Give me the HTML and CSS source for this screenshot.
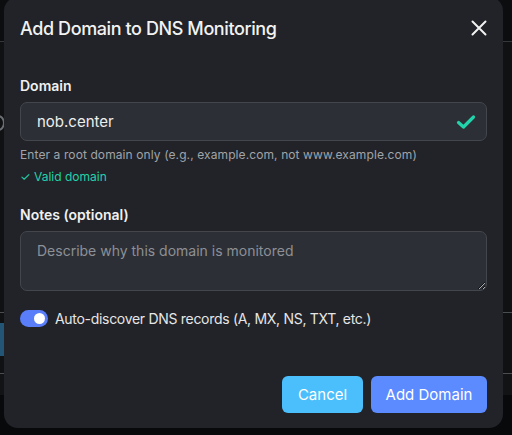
FILE: index.html
```html
<!DOCTYPE html>
<html lang="en">

<head>
    <meta charset="UTF-8">
    <meta name="viewport" content="width=device-width, initial-scale=1.0">
    <title>Add Domain to DNS Monitoring</title>
    <link rel="stylesheet" href="styles.css">
</head>

<body>

    <!-- page behind the dialog -->
    <div class="backdrop">
        <div class="bd-header"></div>
        <div class="bd-main">
            <div class="bd-glyph"></div>
        </div>
        <div class="bd-row">
            <div class="bd-chip"></div>
        </div>
        <div class="bd-gap"></div>
        <div class="bd-footer"></div>
    </div>

    <div class="modal">
        <div class="modal-header">
            <h2>Add Domain to DNS Monitoring</h2>
            <button class="close-btn" aria-label="Close">
                <svg width="16" height="16" viewBox="0 0 16 16">
                    <path d="M1.5 1.5L14.5 14.5M14.5 1.5L1.5 14.5" stroke="#f2f2f2" stroke-width="2" stroke-linecap="round" fill="none"/>
                </svg>
            </button>
        </div>

        <div class="modal-body">
            <div class="field">
                <label for="domainInput">Domain</label>
                <div class="input-box">
                    <input type="text" id="domainInput" value="nob.center">
                    <svg class="valid-icon" width="20" height="16" viewBox="0 0 20 16">
                        <path d="M2.5 8.5L7.5 13L17.5 3" stroke="#22d2aa" stroke-width="3.2" stroke-linecap="round" stroke-linejoin="round" fill="none"/>
                    </svg>
                </div>
                <p class="hint">Enter a root domain only (e.g., example.com, not www.example.com)</p>
                <p class="valid">&#10003; Valid domain</p>
            </div>

            <div class="field">
                <label for="notesInput">Notes (optional)</label>
                <textarea id="notesInput" placeholder="Describe why this domain is monitored"></textarea>
            </div>

            <div class="toggle-row">
                <span class="toggle"><span class="knob"></span></span>
                <span class="toggle-label">Auto-discover DNS records (A, MX, NS, TXT, etc.)</span>
            </div>
        </div>

        <div class="modal-footer">
            <button class="btn btn-cancel">Cancel</button>
            <button class="btn btn-primary">Add Domain</button>
        </div>
    </div>

</body>

</html>
```

FILE: styles.css
```css
body {
    font-family: 'Inter', 'Noto Sans', sans-serif;
    margin: 0;
    padding: 0;
    background-color: #0e1012;
    height: 435px;
    overflow: hidden;
    position: relative;
}

/* page behind the dialog */
.backdrop {
    display: flex;
    flex-direction: column;
    height: 100%;
}

.bd-header {
    height: 41px;
    border-bottom: 1px solid #34373c;
    background-color: #0c0d0f;
}

.bd-main {
    height: 270px;
    background-color: #101113;
    border-bottom: 1px solid #4a4d52;
}

.bd-glyph {
    width: 10px;
    height: 12px;
    border: 2px solid #6b6e73;
    border-radius: 50%;
    margin: 73px 0 0 -9px;
}

.bd-row {
    height: 61px;
    padding-top: 10px;
    box-sizing: border-box;
    background-color: #101113;
    border-bottom: 1px solid #4a4d52;
}

.bd-chip {
    width: 60px;
    height: 33px;
    background-color: #235577;
}

.bd-gap {
    height: 21px;
    background-color: #121315;
}

.bd-footer {
    flex: 1;
    background-color: #08090b;
}

/* dialog */
.modal {
    position: absolute;
    left: 4px;
    top: -3px;
    width: 499px;
    height: 431px;
    box-sizing: border-box;
    background-color: #212329;
    border-radius: 14px;
    padding: 0 16px;
    display: flex;
    flex-direction: column;
}

.modal-header {
    display: flex;
    align-items: center;
    justify-content: space-between;
    height: 62px;
}

.modal-header h2 {
    margin: 0;
    font-size: 18px;
    font-weight: 500;
    color: #f2f2f2;
    letter-spacing: -0.4px;
}

.close-btn {
    background: none;
    border: none;
    padding: 0;
    width: 16px;
    height: 16px;
    display: flex;
    cursor: pointer;
}

.modal-body {
    padding-top: 18px;
}

.field label {
    display: block;
    font-size: 14px;
    font-weight: 600;
    color: #f0f0f0;
    margin-bottom: 8px;
}

.input-box, #notesInput {
    box-sizing: border-box;
    background-color: #2c2f35;
    border: 1px solid #43464c;
    border-radius: 7px;
}

.input-box {
    height: 39px;
    display: flex;
    align-items: center;
    padding: 0 10px 0 16px;
    gap: 10px;
}

#domainInput {
    flex: 1;
    min-width: 0;
    margin: 0;
    padding: 0;
    border: none;
    background: transparent;
    font-family: inherit;
    font-size: 15px;
    color: #eeeeee;
    outline: none;
}

.hint {
    margin: 6px 0 0;
    font-size: 12px;
    color: #a0a4aa;
    letter-spacing: 0.1px;
}

.valid {
    margin: 7px 0 22px;
    font-size: 12px;
    color: #22d2aa;
}

#notesInput {
    display: block;
    width: 100%;
    height: 60px;
    margin: 0;
    padding: 10px 16px 0;
    font-family: inherit;
    font-size: 14px;
    color: #eeeeee;
    resize: vertical;
    outline: none;
}

#notesInput::placeholder {
    color: #8d9096;
}

.toggle-row {
    display: flex;
    align-items: center;
    gap: 7px;
    margin-top: 19px;
}

.toggle {
    width: 28px;
    height: 17px;
    border-radius: 9px;
    background-color: #5a7efa;
    display: flex;
    align-items: center;
    justify-content: flex-end;
    padding: 0 3px;
    box-sizing: border-box;
}

.knob {
    width: 11px;
    height: 11px;
    border-radius: 50%;
    background-color: #ffffff;
}

.toggle-label {
    font-size: 14px;
    color: #e6e6e6;
    letter-spacing: -0.3px;
}

.modal-footer {
    margin-top: auto;
    display: flex;
    justify-content: flex-end;
    gap: 8px;
    padding-bottom: 15px;
}

.btn {
    height: 37px;
    border: none;
    border-radius: 6px;
    font-family: inherit;
    font-size: 15px;
    color: #ffffff;
    cursor: pointer;
}

.btn-cancel {
    width: 81px;
    background-color: #4bbefc;
}

.btn-primary {
    width: 116px;
    background-color: #5c8aff;
}
```
